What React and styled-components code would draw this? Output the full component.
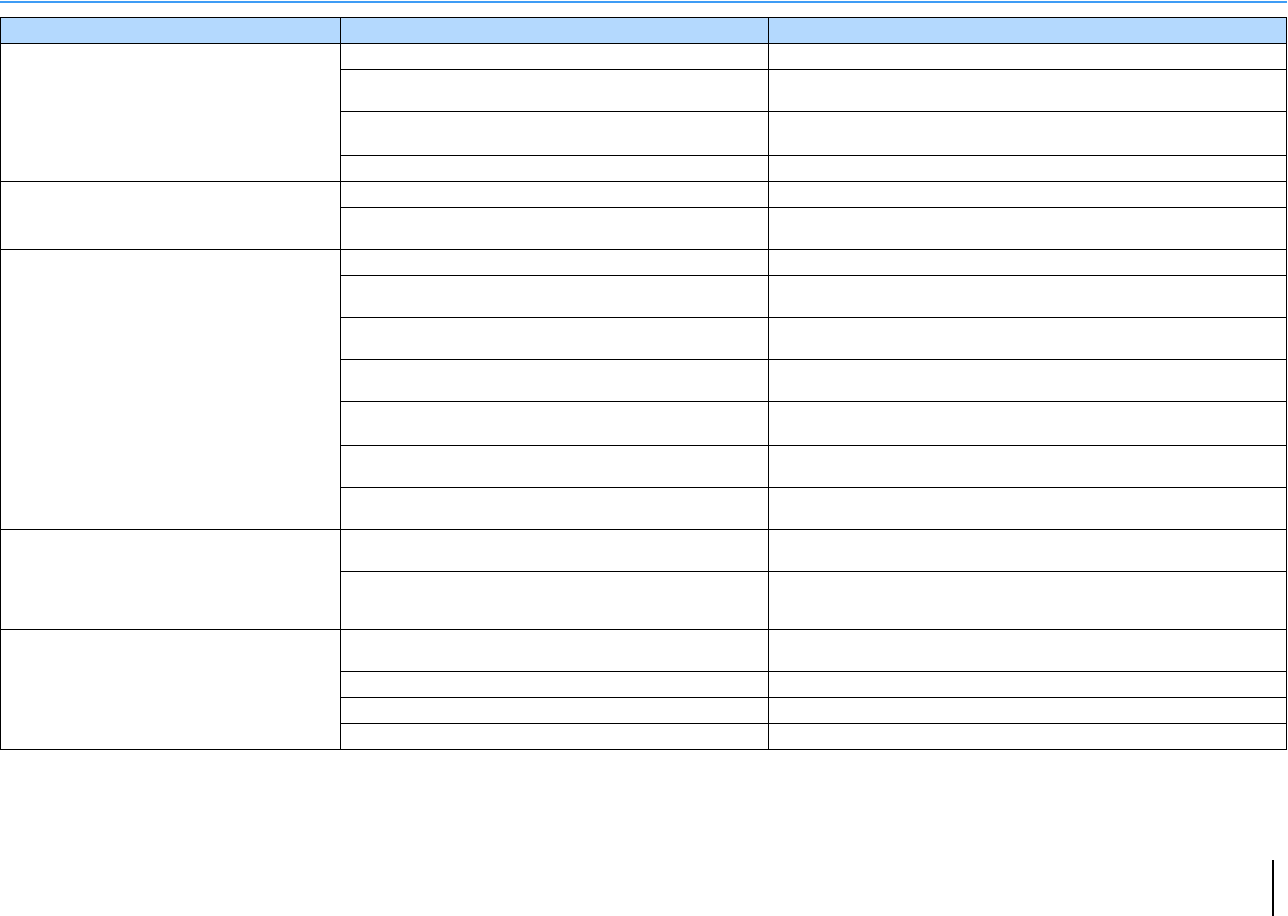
import React from 'react';
import styled, { createGlobalStyle } from 'styled-components';

const GlobalStyle = createGlobalStyle`
  html, body {
    margin: 0;
    padding: 0;
    background: #ffffff;
    font-family: "Liberation Sans", Arial, sans-serif;
  }
`;

const Page = styled.div`
  display: flex;
  flex-direction: column;
  min-height: 100vh;
  box-sizing: border-box;
  padding-top: 1px;
`;

const TopRule = styled.div`
  width: 1287px;
  height: 2px;
  background: #3d9cf5;
`;

const Table = styled.div`
  display: grid;
  grid-template-columns: 339px 427px 517px;
  grid-template-rows: ${props => props.rows.map(h => `${h}px`).join(' ')};
  gap: 1px;
  padding: 1px;
  margin-top: 14px;
  width: 1287px;
  box-sizing: border-box;
  background: #000000;
`;

const HeaderCell = styled.div`
  background: #b4d9fe;
`;

const GroupCell = styled.div`
  grid-column: 1;
  grid-row: span ${props => props.span};
  background: #ffffff;
`;

const Cell = styled.div`
  background: #ffffff;
`;

const Footer = styled.div`
  margin-top: auto;
  display: flex;
  justify-content: flex-end;
  padding-right: 14px;
`;

const PageMarker = styled.div`
  width: 2px;
  height: 56px;
  background: #000000;
`;

// heights of the body rows, grouped by the first column
const groups = [
  [25, 41, 43, 25],
  [25, 41],
  [25, 41, 41, 41, 43, 41, 41],
  [41, 57],
  [41, 25, 25, 25],
];

export default function App() {
  const rows = [25, ...groups.flat()];

  return (
    <Page>
      <GlobalStyle />
      <TopRule />
      <Table rows={rows}>
        <HeaderCell />
        <HeaderCell />
        <HeaderCell />
        {groups.map((group, g) =>
          group.map((h, i) => (
            <React.Fragment key={`${g}-${i}`}>
              {i === 0 && <GroupCell span={group.length} />}
              <Cell />
              <Cell />
            </React.Fragment>
          )),
        )}
      </Table>
      <Footer>
        <PageMarker />
      </Footer>
    </Page>
  );
}
